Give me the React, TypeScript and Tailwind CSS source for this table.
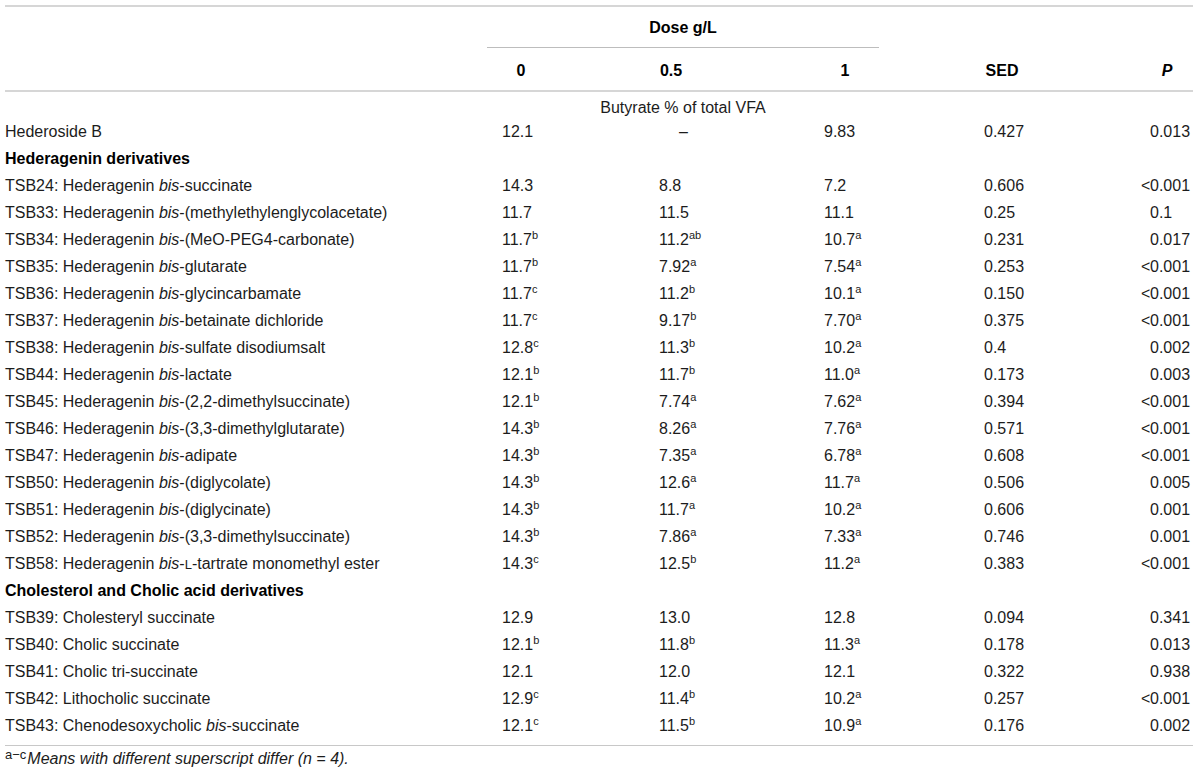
import React from "react";

type Row =
  | { kind: "heading"; text: string }
  | { kind: "data"; label: React.ReactNode; v0: string; v05: string; v1: string; sed: string; p: string };

const B = () => <i>bis</i>;

const H = (suffix: React.ReactNode) => (
  <>
    Hederagenin <B />
    {suffix}
  </>
);

const rows: Row[] = [
  { kind: "data", label: "Hederoside B", v0: "12.1", v05: "–", v1: "9.83", sed: "0.427", p: "0.013" },
  { kind: "heading", text: "Hederagenin derivatives" },
  { kind: "data", label: <>TSB24: {H("-succinate")}</>, v0: "14.3", v05: "8.8", v1: "7.2", sed: "0.606", p: "<0.001" },
  { kind: "data", label: <>TSB33: {H("-(methylethylenglycolacetate)")}</>, v0: "11.7", v05: "11.5", v1: "11.1", sed: "0.25", p: "0.1" },
  { kind: "data", label: <>TSB34: {H("-(MeO-PEG4-carbonate)")}</>, v0: "11.7^b", v05: "11.2^ab", v1: "10.7^a", sed: "0.231", p: "0.017" },
  { kind: "data", label: <>TSB35: {H("-glutarate")}</>, v0: "11.7^b", v05: "7.92^a", v1: "7.54^a", sed: "0.253", p: "<0.001" },
  { kind: "data", label: <>TSB36: {H("-glycincarbamate")}</>, v0: "11.7^c", v05: "11.2^b", v1: "10.1^a", sed: "0.150", p: "<0.001" },
  { kind: "data", label: <>TSB37: {H("-betainate dichloride")}</>, v0: "11.7^c", v05: "9.17^b", v1: "7.70^a", sed: "0.375", p: "<0.001" },
  { kind: "data", label: <>TSB38: {H("-sulfate disodiumsalt")}</>, v0: "12.8^c", v05: "11.3^b", v1: "10.2^a", sed: "0.4", p: "0.002" },
  { kind: "data", label: <>TSB44: {H("-lactate")}</>, v0: "12.1^b", v05: "11.7^b", v1: "11.0^a", sed: "0.173", p: "0.003" },
  { kind: "data", label: <>TSB45: {H("-(2,2-dimethylsuccinate)")}</>, v0: "12.1^b", v05: "7.74^a", v1: "7.62^a", sed: "0.394", p: "<0.001" },
  { kind: "data", label: <>TSB46: {H("-(3,3-dimethylglutarate)")}</>, v0: "14.3^b", v05: "8.26^a", v1: "7.76^a", sed: "0.571", p: "<0.001" },
  { kind: "data", label: <>TSB47: {H("-adipate")}</>, v0: "14.3^b", v05: "7.35^a", v1: "6.78^a", sed: "0.608", p: "<0.001" },
  { kind: "data", label: <>TSB50: {H("-(diglycolate)")}</>, v0: "14.3^b", v05: "12.6^a", v1: "11.7^a", sed: "0.506", p: "0.005" },
  { kind: "data", label: <>TSB51: {H("-(diglycinate)")}</>, v0: "14.3^b", v05: "11.7^a", v1: "10.2^a", sed: "0.606", p: "0.001" },
  { kind: "data", label: <>TSB52: {H("-(3,3-dimethylsuccinate)")}</>, v0: "14.3^b", v05: "7.86^a", v1: "7.33^a", sed: "0.746", p: "0.001" },
  {
    kind: "data",
    label: (
      <>
        TSB58: Hederagenin <B />-<span className="text-[13px]">L</span>-tartrate monomethyl ester
      </>
    ),
    v0: "14.3^c",
    v05: "12.5^b",
    v1: "11.2^a",
    sed: "0.383",
    p: "<0.001",
  },
  { kind: "heading", text: "Cholesterol and Cholic acid derivatives" },
  { kind: "data", label: "TSB39: Cholesteryl succinate", v0: "12.9", v05: "13.0", v1: "12.8", sed: "0.094", p: "0.341" },
  { kind: "data", label: "TSB40: Cholic succinate", v0: "12.1^b", v05: "11.8^b", v1: "11.3^a", sed: "0.178", p: "0.013" },
  { kind: "data", label: "TSB41: Cholic tri-succinate", v0: "12.1", v05: "12.0", v1: "12.1", sed: "0.322", p: "0.938" },
  { kind: "data", label: "TSB42: Lithocholic succinate", v0: "12.9^c", v05: "11.4^b", v1: "10.2^a", sed: "0.257", p: "<0.001" },
  { kind: "data", label: <>TSB43: Chenodesoxycholic <B />-succinate</>, v0: "12.1^c", v05: "11.5^b", v1: "10.9^a", sed: "0.176", p: "0.002" },
];

function Val({ v }: { v: string }) {
  const [main, sup] = v.split("^");
  return (
    <span>
      {main}
      {sup ? <sup className="text-[11px] top-[-0.55em]">{sup}</sup> : null}
    </span>
  );
}

function PVal({ v }: { v: string }) {
  const lt = v.startsWith("<");
  return (
    <span className="flex">
      <span className="inline-block w-[9px] text-right">{lt ? "<" : ""}</span>
      <span>{lt ? v.slice(1) : v}</span>
    </span>
  );
}

const grid = "grid grid-cols-[497px_157px_165px_160px_157px_52px]";

export default function App() {
  return (
    <div
      className="w-[1200px] h-[778px] bg-white text-[#1c1c1c] text-[16px]"
      style={{ fontFamily: '"Liberation Sans", Arial, Helvetica, sans-serif' }}
    >
      <div className="ml-[5px] w-[1188px] pt-[5px]">
        <div className="h-[2px] bg-[#d6d6d6]" />
        {/* header row 1 */}
        <div className="flex h-[41px]">
          <div className="w-[482px]" />
          <div className="w-[392px] flex flex-col">
            <div className="flex-1 pt-[7px] leading-[27px] text-center font-bold text-black">Dose g/L</div>
            <div className="h-[1.5px] bg-[#bdbdbd]" />
          </div>
        </div>
        {/* header row 2 */}
        <div className={`${grid} h-[42px] pt-[9px] leading-[27px] font-bold text-black`}>
          <div />
          <div className="w-[38px] text-center">0</div>
          <div className="w-[24px] text-center">0.5</div>
          <div className="w-[42px] text-center">1</div>
          <div className="w-[36px] text-center">SED</div>
          <div className="w-[52px] text-center italic">P</div>
        </div>
        <div className="h-[2px] bg-[#d6d6d6]" />
        {/* Butyrate caption */}
        <div className="flex pt-[6px] h-[26px]">
          <div className="w-[482px]" />
          <div className="w-[392px] text-center leading-[20px]">Butyrate % of total VFA</div>
        </div>
        {/* body */}
        <div>
          {rows.map((r, i) =>
            r.kind === "heading" ? (
              <div key={i} className="h-[27px] leading-[27px] font-bold text-black">
                {r.text}
              </div>
            ) : (
              <div key={i} className={`${grid} h-[27px] leading-[27px]`}>
                <div className="whitespace-nowrap">{r.label}</div>
                <div>
                  <Val v={r.v0} />
                </div>
                <div className={r.v05 === "–" ? "pl-[20px]" : ""}>
                  <Val v={r.v05} />
                </div>
                <div>
                  <Val v={r.v1} />
                </div>
                <div>{r.sed}</div>
                <div>
                  <PVal v={r.p} />
                </div>
              </div>
            )
          )}
        </div>
        <div className="mt-[6px] h-px bg-[#c8c8c8]" />
        <div className="leading-[26px] whitespace-nowrap">
          <sup className="text-[13px] top-[-0.4em] mr-[1px]">a−c</sup>
          <i>
            Means with different superscript differ (<i>n</i> = 4).
          </i>
        </div>
      </div>
    </div>
  );
}
